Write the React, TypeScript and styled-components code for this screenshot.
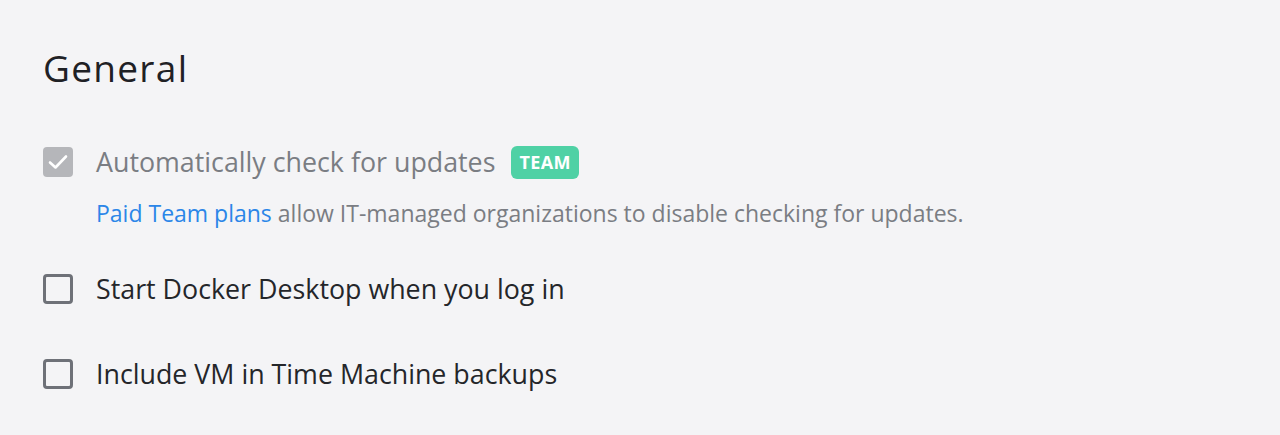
import React from "react";
import styled, { createGlobalStyle } from "styled-components";

const Global = createGlobalStyle`
  html, body { margin: 0; padding: 0; background: #f4f4f6; }
  body { font-family: "Open Sans", "Noto Sans", sans-serif; }
`;

const Page = styled.div`
  background: #f4f4f6;
  height: 435px;
  padding: 43px 43px 0;
  box-sizing: border-box;
`;

const Title = styled.h1`
  margin: 0 0 51px;
  font-size: 37px;
  line-height: 50px;
  font-weight: 400;
  letter-spacing: 1.3px;
  color: #1f2125;
`;

const Option = styled.div<{ $gap?: number }>`
  display: flex;
  flex-direction: column;
  margin-bottom: ${(p) => p.$gap ?? 0}px;
`;

const Row = styled.label`
  display: flex;
  align-items: center;
  gap: 23px;
  height: 36px;
`;

const Box = styled.span<{ $checked?: boolean }>`
  width: 30px;
  height: 30px;
  box-sizing: border-box;
  border-radius: 4px;
  display: flex;
  align-items: center;
  justify-content: center;
  flex-shrink: 0;
  background: ${(p) => (p.$checked ? "#b5b6ba" : "transparent")};
  border: ${(p) => (p.$checked ? "none" : "3px solid #6e7178")};
`;

const Label = styled.span<{ $muted?: boolean }>`
  display: flex;
  align-items: center;
  font-size: 26.8px;
  line-height: 36px;
  color: ${(p) => (p.$muted ? "#7a7d83" : "#24262a")};
`;

const Badge = styled.span`
  margin-left: 16px;
  background: #4fd1a5;
  color: #fff;
  font-weight: 700;
  font-size: 18px;
  line-height: 33px;
  padding: 0 8px;
  border-radius: 6px;
  letter-spacing: 0.4px;
`;

const Help = styled.p`
  margin: 18px 0 0 53px;
  font-size: 23px;
  line-height: 30px;
  color: #7a7d83;
`;

const Link = styled.a`
  color: #2b86e8;
  text-decoration: none;
`;

const Check = () => (
  <svg width="20" height="16" viewBox="0 0 20 16" fill="none">
    <path d="M2 8.5 L7.5 13.5 L18 2.5" stroke="#fff" strokeWidth="2.6" strokeLinecap="round" strokeLinejoin="round" />
  </svg>
);

export default function App() {
  return (
    <>
      <Global />
      <Page>
        <Title>General</Title>
        <Option $gap={43}>
          <Row>
            <Box $checked>
              <Check />
            </Box>
            <Label $muted>
              Automatically check for updates
              <Badge>TEAM</Badge>
            </Label>
          </Row>
          <Help>
            <Link href="#">Paid Team plans</Link> allow IT-managed organizations to disable checking for updates.
          </Help>
        </Option>
        <Option $gap={49}>
          <Row>
            <Box />
            <Label>Start Docker Desktop when you log in</Label>
          </Row>
        </Option>
        <Option>
          <Row>
            <Box />
            <Label>Include VM in Time Machine backups</Label>
          </Row>
        </Option>
      </Page>
    </>
  );
}
